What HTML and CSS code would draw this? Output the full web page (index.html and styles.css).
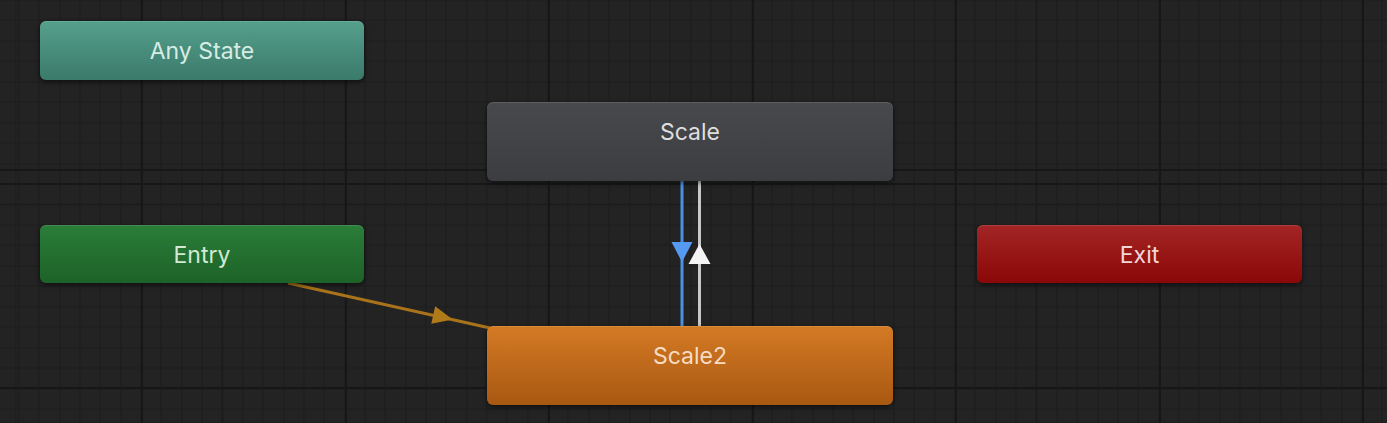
FILE: index.html
```html
<!DOCTYPE html>
<html lang="en">
<head>
<meta charset="utf-8">
<title>Animator</title>
<link rel="stylesheet" href="styles.css">
</head>
<body>
<div class="graph">
  <svg class="links" width="1387" height="423" viewBox="0 0 1387 423">
    <line class="link-entry" x1="288" y1="283" x2="490" y2="328"/>
    <polygon class="head-entry" points="11,0 -9,-9 -9,9" transform="translate(442 317) rotate(12.6)"/>
    <line class="link-down" x1="682" y1="180" x2="682" y2="328"/>
    <polygon class="head-down" points="671.5,242 692.5,242 682,262"/>
    <line class="link-up" x1="699.5" y1="180" x2="699.5" y2="328"/>
    <polygon class="head-up" points="688.5,264 710.5,264 699.5,244"/>
  </svg>
  <div class="node node-any">Any State</div>
  <div class="node node-entry">Entry</div>
  <div class="node node-exit">Exit</div>
  <div class="node node-state node-scale">Scale</div>
  <div class="node node-state node-default">Scale2</div>
</div>
</body>
</html>
```
FILE: styles.css
```css
html, body {
  margin: 0;
  padding: 0;
  width: 1387px;
  height: 423px;
  overflow: hidden;
}

body {
  background-color: #232323;
  background-image:
    repeating-linear-gradient(to right, #171717 0 2px, transparent 2px 203.5px),
    repeating-linear-gradient(to bottom, #171717 0 2px, transparent 2px 204.5px),
    repeating-linear-gradient(to right, #1c1c1c 0 1px, transparent 1px 20.35px),
    repeating-linear-gradient(to bottom, #1c1c1c 0 1px, transparent 1px 20.45px);
  background-position: 141px 0, 0 183px, 18.4px 0, 0 -0.5px;
  font-family: Inter, "Noto Sans", "DejaVu Sans", sans-serif;
}

.graph {
  position: relative;
  width: 1387px;
  height: 423px;
}

.links {
  position: absolute;
  left: 0;
  top: 0;
}

.link-entry {
  stroke: #a8731a;
  stroke-width: 3;
}
.head-entry { fill: #b07a1a; }

.link-down {
  stroke: #4b90e2;
  stroke-width: 3;
}
.head-down { fill: #559af0; }

.link-up {
  stroke: #c8c8c8;
  stroke-width: 3;
}
.head-up { fill: #f4f4f4; }

.node {
  position: absolute;
  box-sizing: border-box;
  border-radius: 6px;
  text-align: center;
  font-size: 23px;
  line-height: 26px;
  padding-top: 17px;
  color: rgba(255, 255, 255, 0.84);
  box-shadow: 0 2px 5px rgba(0, 0, 0, 0.55), inset 0 1px 0 rgba(255, 255, 255, 0.12);
}

.node-any {
  left: 40px;
  top: 21px;
  width: 324px;
  height: 59px;
  background: linear-gradient(to bottom, #55a08c, #3b7a6b);
  color: #d7ece4;
}

.node-entry {
  left: 40px;
  top: 225px;
  width: 324px;
  height: 58px;
  background: linear-gradient(to bottom, #2a7e38, #1d6228);
  color: #d2ead4;
}

.node-exit {
  left: 977px;
  top: 225px;
  width: 325px;
  height: 58px;
  background: linear-gradient(to bottom, #a42525, #8a0707);
  color: #f2d6d6;
}

.node-state {
  left: 487px;
  width: 406px;
  height: 79px;
}

.node-scale {
  top: 102px;
  background: linear-gradient(to bottom, #48494c, #3c3d40);
  color: #dedede;
}

.node-default {
  top: 326px;
  background: linear-gradient(to bottom, #d37a24, #a95812);
  color: #f6dcc2;
}
```
